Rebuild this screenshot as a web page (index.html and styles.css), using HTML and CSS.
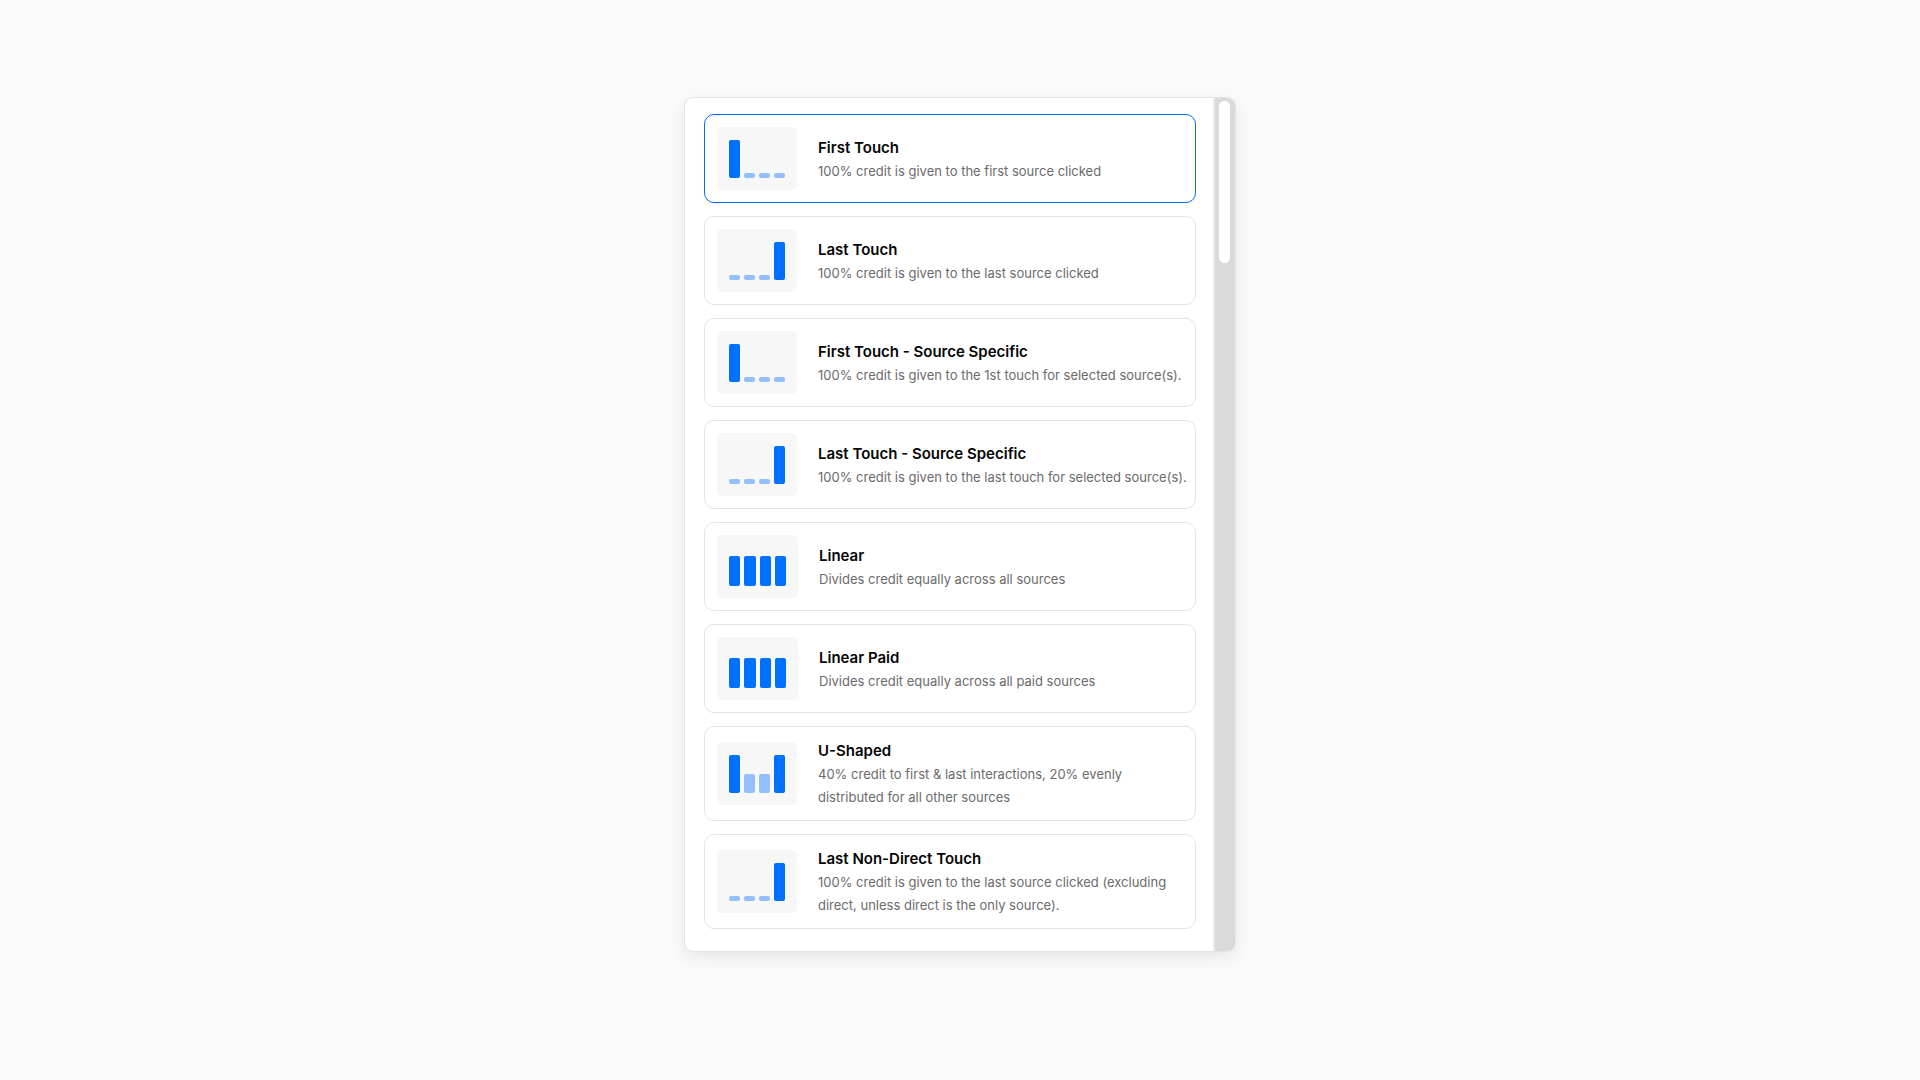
FILE: index.html
```
<!DOCTYPE html>
<html lang="en">
    <head>
        <meta charset="utf-8">
        <title>Attribution Models</title>
        <link rel="stylesheet" href="styles.css">
    </head>
    <body>
        <form class="panel">
            <div class="list">
                <label class="card">
                    <input type="radio" name="model" class="radio" checked>
                    <span class="chart">
                        <span class="bar tall"></span><span class="bar tiny"></span><span class="bar tiny"></span><span class="bar tiny"></span>
                    </span>
                    <span class="text">
                        <span class="title">First Touch</span>
                        <span class="desc">100% credit is given to the first source clicked</span>
                    </span>
                </label>

                <label class="card">
                    <input type="radio" name="model" class="radio">
                    <span class="chart">
                        <span class="bar tiny"></span><span class="bar tiny"></span><span class="bar tiny"></span><span class="bar tall"></span>
                    </span>
                    <span class="text">
                        <span class="title">Last Touch</span>
                        <span class="desc">100% credit is given to the last source clicked</span>
                    </span>
                </label>

                <label class="card">
                    <input type="radio" name="model" class="radio">
                    <span class="chart">
                        <span class="bar tall"></span><span class="bar tiny"></span><span class="bar tiny"></span><span class="bar tiny"></span>
                    </span>
                    <span class="text">
                        <span class="title">First Touch - Source Specific</span>
                        <span class="desc">100% credit is given to the 1st touch for selected source(s).</span>
                    </span>
                </label>

                <label class="card">
                    <input type="radio" name="model" class="radio">
                    <span class="chart">
                        <span class="bar tiny"></span><span class="bar tiny"></span><span class="bar tiny"></span><span class="bar tall"></span>
                    </span>
                    <span class="text">
                        <span class="title">Last Touch - Source Specific</span>
                        <span class="desc">100% credit is given to the last touch for selected source(s).</span>
                    </span>
                </label>

                <label class="card">
                    <input type="radio" name="model" class="radio">
                    <span class="chart">
                        <span class="bar even"></span><span class="bar even wide"></span><span class="bar even"></span><span class="bar even"></span>
                    </span>
                    <span class="text">
                        <span class="title">Linear</span>
                        <span class="desc">Divides credit equally across all sources</span>
                    </span>
                </label>

                <label class="card">
                    <input type="radio" name="model" class="radio">
                    <span class="chart">
                        <span class="bar even"></span><span class="bar even wide"></span><span class="bar even"></span><span class="bar even"></span>
                    </span>
                    <span class="text">
                        <span class="title">Linear Paid</span>
                        <span class="desc">Divides credit equally across all paid sources</span>
                    </span>
                </label>

                <label class="card">
                    <input type="radio" name="model" class="radio">
                    <span class="chart">
                        <span class="bar tall"></span><span class="bar half"></span><span class="bar half"></span><span class="bar tall"></span>
                    </span>
                    <span class="text">
                        <span class="title">U-Shaped</span>
                        <span class="desc">40% credit to first &amp; last interactions, 20% evenly distributed for all other sources</span>
                    </span>
                </label>

                <label class="card">
                    <input type="radio" name="model" class="radio">
                    <span class="chart">
                        <span class="bar tiny"></span><span class="bar tiny"></span><span class="bar tiny"></span><span class="bar tall"></span>
                    </span>
                    <span class="text">
                        <span class="title">Last Non-Direct Touch</span>
                        <span class="desc">100% credit is given to the last source clicked (excluding direct, unless direct is the only source).</span>
                    </span>
                </label>
            </div>

            <div class="track">
                <div class="thumb"></div>
            </div>
        </form>
    </body>
</html>
```
FILE: styles.css
```
* {
    box-sizing: border-box;
}

body {
    margin: 0;
    padding: 97px 20px 40px;
    min-height: 100vh;
    background: #fafafa;
    font-family: Inter, "Liberation Sans", sans-serif;
}

.panel {
    display: flex;
    max-width: 552px;
    margin: 0 auto;
    background: #fff;
    border: 1px solid #e4e4e4;
    border-radius: 9px;
    overflow: hidden;
    box-shadow: 0 6px 14px rgba(20, 30, 50, 0.06), 0 4px 26px rgba(20, 30, 50, 0.03);
}

.list {
    flex: 1;
    display: flex;
    flex-direction: column;
    gap: 13px;
    padding: 16px 17px 22px 19px;
}

.card {
    position: relative;
    display: flex;
    align-items: center;
    gap: 21px;
    min-height: 89px;
    padding: 11px 6px 11px 12px;
    border: 1px solid #e4e4e4;
    border-radius: 10px;
    cursor: pointer;
}

.card:has(.radio:checked) {
    border-color: #0070ff;
}

/* the whole card is the click target */
.radio {
    position: absolute;
    margin: 0;
    opacity: 0;
}

.chart {
    flex: none;
    display: flex;
    align-items: flex-end;
    gap: 4px;
    height: 63px;
    padding: 12px;
    background: #f7f7f7;
    border-radius: 5px;
}

.bar {
    width: 11px;
    border-radius: 2px;
    background: #0070ff;
}

.tall {
    height: 38px;
}

.even {
    height: 30px;
}

.wide {
    width: 12px;
}

.half {
    height: 19px;
    background: #94bffd;
}

.tiny {
    height: 5px;
    background: #94bffd;
}

.title {
    display: block;
    font-size: 15px;
    font-weight: 600;
    line-height: 25px;
    color: #050505;
}

.desc {
    display: block;
    font-size: 13px;
    line-height: 23px;
    color: #6b6b6b;
}

.track {
    width: 22px;
    padding: 3px 5px 4px 4px;
    background: #dadada;
    border-left: 2px solid #ebebeb;
}

.thumb {
    height: 162px;
    border-radius: 6px;
    background: #fff;
}
```
